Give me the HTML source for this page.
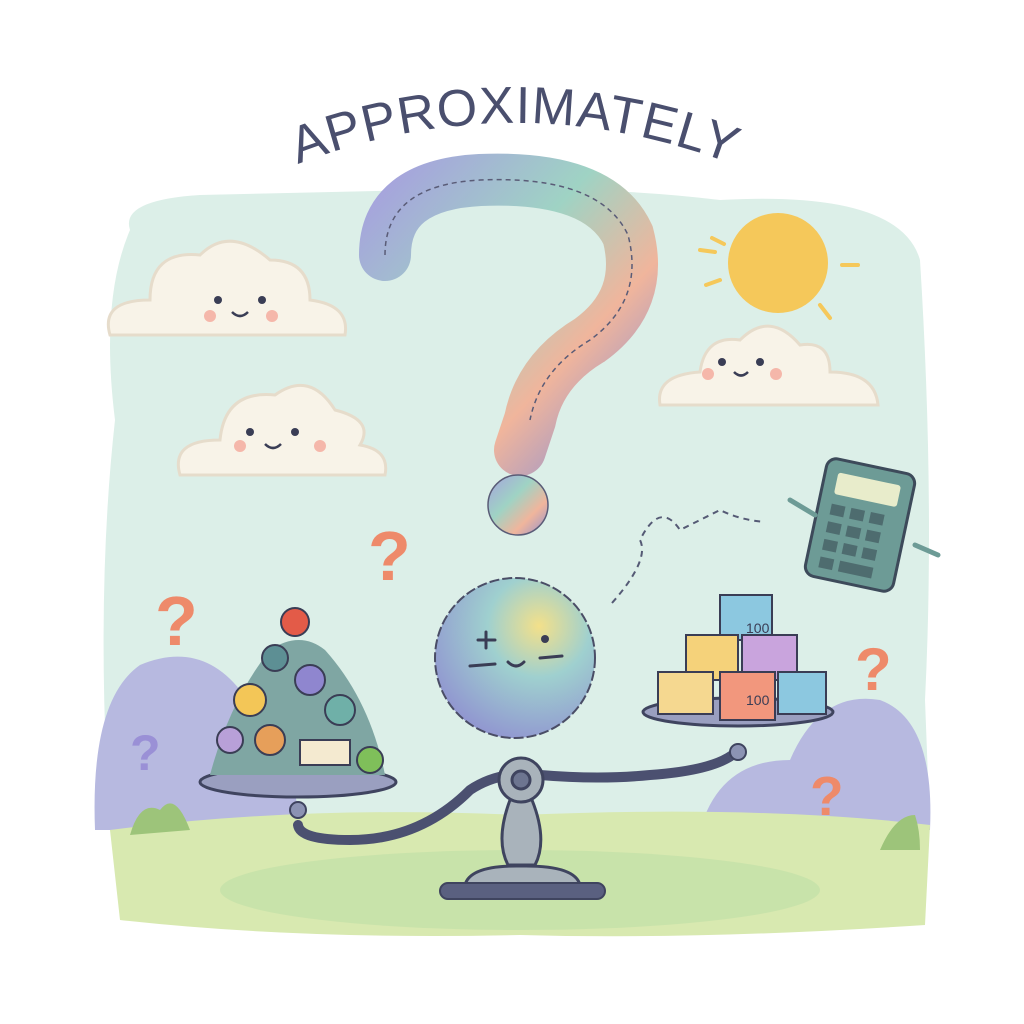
<!DOCTYPE html>
<html><head><meta charset="utf-8"><style>html,body{margin:0;padding:0;background:#fff;width:1024px;height:1024px;overflow:hidden}</style></head>
<body>
<svg width="1024" height="1024" viewBox="0 0 1024 1024" xmlns="http://www.w3.org/2000/svg">
<defs>
<radialGradient id="ball" cx="0.65" cy="0.3" r="0.8"><stop offset="0" stop-color="#f3e08a"/><stop offset="0.4" stop-color="#9fd0cf"/><stop offset="1" stop-color="#8f8fd0"/></radialGradient>
<linearGradient id="qm" x1="0" y1="0" x2="1" y2="1"><stop offset="0" stop-color="#a6a3dd"/><stop offset="0.4" stop-color="#9fd3c4"/><stop offset="0.7" stop-color="#f0b59c"/><stop offset="1" stop-color="#8d90d2"/></linearGradient>
</defs>
<rect width="1024" height="1024" fill="#fff"/>
<path d="M130 230 Q120 200 200 195 L420 190 Q600 185 720 200 Q900 190 920 260 Q935 500 925 700 L930 830 L110 830 Q95 600 115 420 Q100 300 130 230Z" fill="#dcefe8"/>
<path d="M95 830 Q90 700 140 665 Q200 640 240 690 Q290 720 300 830Z" fill="#b7b9e0"/>
<path d="M700 830 Q720 760 790 760 Q820 690 880 700 Q935 720 930 830Z" fill="#b7b9e0"/>
<path d="M110 830 Q300 805 520 815 Q760 805 930 825 L925 925 Q700 940 520 935 Q300 940 120 920Z" fill="#d8e9b0"/>
<ellipse cx="520" cy="890" rx="300" ry="40" fill="#c2dfa8" opacity="0.7"/>
<path id="arc" d="M288 168 Q515 78 742 168" fill="none"/>
<text font-family="Liberation Sans, sans-serif" font-size="52" fill="#4a4f6e" letter-spacing="1"><textPath href="#arc" startOffset="50%" text-anchor="middle">APPROXIMATELY</textPath></text>
<g fill="#f8f3e8" stroke="#e6dccb" stroke-width="3">
<path d="M110 335 Q100 300 150 300 Q150 250 200 255 Q230 225 270 260 Q310 260 310 300 Q350 305 345 335Z"/>
<path d="M180 475 Q170 440 220 440 Q225 390 275 395 Q310 370 335 410 Q375 420 360 445 Q390 450 385 475Z"/>
<path d="M660 405 Q655 375 700 372 Q705 335 740 340 Q770 310 800 345 Q830 340 830 372 Q875 372 878 405Z"/>
</g>
<g fill="#3a3d55"><circle cx="218" cy="300" r="4"/><circle cx="262" cy="300" r="4"/><circle cx="250" cy="432" r="4"/><circle cx="295" cy="432" r="4"/><circle cx="722" cy="362" r="4"/><circle cx="760" cy="362" r="4"/></g>
<g fill="none" stroke="#3a3d55" stroke-width="2.5"><path d="M232 312 Q240 320 248 312"/><path d="M265 444 Q273 452 281 444"/><path d="M734 372 Q741 379 748 372"/></g>
<g fill="#f5b7aa"><circle cx="210" cy="316" r="6"/><circle cx="272" cy="316" r="6"/><circle cx="240" cy="446" r="6"/><circle cx="320" cy="446" r="6"/><circle cx="708" cy="374" r="6"/><circle cx="776" cy="374" r="6"/></g>
<circle cx="778" cy="263" r="50" fill="#f5c85a"/>
<g stroke="#f5c85a" stroke-width="4" stroke-linecap="round"><path d="M700 250 L715 252"/><path d="M842 265 L858 265"/><path d="M706 285 L720 280"/><path d="M820 305 L830 318"/><path d="M712 238 L724 244"/></g>
<path d="M385 255 Q385 185 480 180 Q600 175 628 235 Q645 300 590 340 Q540 370 530 420 L520 450" fill="none" stroke="url(#qm)" stroke-width="52" stroke-linecap="round"/>
<path d="M385 255 Q385 185 480 180 Q600 175 628 235 Q645 300 590 340 Q540 370 530 420" fill="none" stroke="#5a5c77" stroke-width="1.5" stroke-dasharray="5 4"/>
<circle cx="518" cy="505" r="30" fill="url(#qm)" stroke="#5a5c77" stroke-width="1.5"/>
<path d="M612 603 Q650 560 640 540 Q660 500 680 530 Q700 520 720 510 Q740 520 765 522" fill="none" stroke="#555a75" stroke-width="2" stroke-dasharray="6 5"/>
<g transform="rotate(12 860 525)">
<rect x="815" y="465" width="90" height="120" rx="10" fill="#6d9b96" stroke="#3d4a5a" stroke-width="3"/>
<rect x="828" y="478" width="64" height="22" rx="3" fill="#e8eccb"/>
<g fill="#4e6c6f"><rect x="828" y="510" width="14" height="11"/><rect x="848" y="510" width="14" height="11"/><rect x="868" y="510" width="14" height="11"/><rect x="828" y="528" width="14" height="11"/><rect x="848" y="528" width="14" height="11"/><rect x="868" y="528" width="14" height="11"/><rect x="828" y="546" width="14" height="11"/><rect x="848" y="546" width="14" height="11"/><rect x="868" y="546" width="14" height="11"/><rect x="828" y="564" width="14" height="11"/><rect x="848" y="564" width="34" height="11"/></g>
</g>
<path d="M790 500 L815 515 M915 545 L938 555" stroke="#6d9b96" stroke-width="5" stroke-linecap="round"/>
<g font-family="Liberation Sans, sans-serif" font-weight="bold" fill="#ee8a6a">
<text x="368" y="580" font-size="70">?</text><text x="155" y="645" font-size="70">?</text>
<text x="855" y="690" font-size="60">?</text><text x="810" y="815" font-size="55">?</text></g>
<text x="130" y="770" font-family="Liberation Sans, sans-serif" font-weight="bold" font-size="50" fill="#9a90d6">?</text>
<circle cx="515" cy="658" r="80" fill="url(#ball)" stroke="#4a4d66" stroke-width="2" stroke-dasharray="10 3"/>
<g stroke="#3a3d55" stroke-width="3" fill="none" stroke-linecap="round"><path d="M478 640 L495 640 M486 632 L486 648 M470 666 L495 664 M540 658 L562 656"/><path d="M508 662 Q516 670 524 662"/></g>
<circle cx="545" cy="639" r="4" fill="#3a3d55"/>
<path d="M298 825 Q300 840 350 840 Q420 840 470 790 Q500 770 540 775 Q600 780 650 775 Q720 770 738 750" fill="none" stroke="#4b5070" stroke-width="10" stroke-linecap="round"/>
<circle cx="738" cy="752" r="8" fill="#8c93b3" stroke="#3f445f" stroke-width="2"/>
<circle cx="298" cy="810" r="8" fill="#8c93b3" stroke="#3f445f" stroke-width="2"/>
<path d="M510 800 Q495 840 508 865 L535 865 Q548 840 532 800Z" fill="#a9b3bb" stroke="#3f445f" stroke-width="3"/>
<circle cx="521" cy="780" r="22" fill="#a9b3bb" stroke="#3f445f" stroke-width="3"/>
<circle cx="521" cy="780" r="9" fill="#6d7590" stroke="#3f445f" stroke-width="3"/>
<path d="M465 885 Q470 865 521 866 Q575 865 580 885Z" fill="#a9b3bb" stroke="#3f445f" stroke-width="3"/>
<rect x="440" y="883" width="165" height="16" rx="8" fill="#5a6080" stroke="#3f445f" stroke-width="2"/>
<ellipse cx="738" cy="712" rx="95" ry="14" fill="#9a9fc0" stroke="#3f445f" stroke-width="3"/>
<ellipse cx="298" cy="782" rx="98" ry="15" fill="#9a9fc0" stroke="#3f445f" stroke-width="3"/>
<g stroke="#3a3d55" stroke-width="2">
<rect x="720" y="595" width="52" height="45" fill="#8cc8e0"/><rect x="686" y="635" width="52" height="45" fill="#f5d27a"/><rect x="742" y="635" width="55" height="45" fill="#c9a4dd"/>
<rect x="658" y="672" width="55" height="42" fill="#f5d890"/><rect x="720" y="672" width="55" height="48" fill="#f2977d"/><rect x="778" y="672" width="48" height="42" fill="#8cc8e0"/>
</g>
<text x="746" y="633" font-family="Liberation Sans,sans-serif" font-size="14" fill="#3a3d55">100</text>
<text x="746" y="705" font-family="Liberation Sans,sans-serif" font-size="14" fill="#3a3d55">100</text>
<path d="M210 775 Q230 700 270 650 Q300 630 325 650 Q370 700 385 775Z" fill="#7fa6a3"/>
<g stroke="#3a3d55" stroke-width="2"><circle cx="295" cy="622" r="14" fill="#e35b48"/><circle cx="250" cy="700" r="16" fill="#f3c657"/><circle cx="310" cy="680" r="15" fill="#8f86cf"/><circle cx="340" cy="710" r="15" fill="#6fb0a8"/><circle cx="270" cy="740" r="15" fill="#e69f5a"/><circle cx="370" cy="760" r="13" fill="#7fbf5a"/><circle cx="275" cy="658" r="13" fill="#5d8f94"/><circle cx="230" cy="740" r="13" fill="#b8a0d8"/><rect x="300" y="740" width="50" height="25" fill="#f4ead0"/></g>
<path d="M130 835 Q140 800 160 810 Q175 790 190 830Z M880 850 Q895 815 915 815 Q920 830 920 850Z" fill="#9dc47a"/>
</svg>
</body></html>
